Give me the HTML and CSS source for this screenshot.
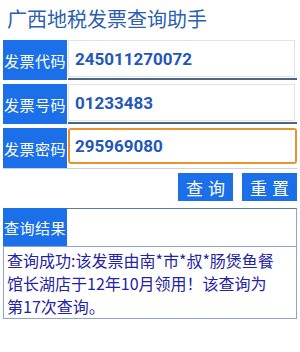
FILE: index.html
```html
<!DOCTYPE html>
<html lang="zh-CN">
<head>
    <meta charset="UTF-8">
    <meta name="viewport" content="width=device-width, initial-scale=1.0">
    <title>广西地税发票查询助手</title>
    <link rel="stylesheet" href="styles.css">
</head>
<body>
    <h1 class="title">广西地税发票查询助手</h1>

    <div class="row">
        <div class="label">发票代码</div>
        <div class="field"><div class="box">245011270072</div></div>
    </div>
    <div class="row">
        <div class="label">发票号码</div>
        <div class="field"><div class="box">01233483</div></div>
    </div>
    <div class="row row-last">
        <div class="label">发票密码</div>
        <div class="field focus"><div class="box">295969080</div></div>
    </div>

    <div class="buttons">
        <button class="btn">查询</button>
        <button class="btn">重置</button>
    </div>

    <div class="result">
        <div class="result-head">
            <div class="label">查询结果</div>
        </div>
        <div class="result-text">查询成功:该发票由南*市*叔*肠煲鱼餐<br>馆长湖店于12年10月领用！该查询为<br>第17次查询。</div>
    </div>
</body>
</html>
```

FILE: styles.css
```css
body {
    margin: 0;
    background-color: #fff;
    font-family: "Noto Sans CJK SC", "Noto Sans", sans-serif;
    width: 300px;
}
.title {
    margin: 0;
    height: 40px;
    padding-left: 7px;
    font-size: 20px;
    font-weight: normal;
    line-height: 38px;
    color: #2b5fb0;
}
.row {
    display: flex;
    height: 40px;
    margin: 0 3px 4px 3px;
}
.row-last {
    border-bottom: 1px solid #c8d4e2;
    height: 40px;
}
.label {
    width: 64px;
    flex-shrink: 0;
    background-color: #1b6fe8;
    color: #fff;
    font-size: 15px;
    letter-spacing: 0.5px;
    display: flex;
    align-items: center;
    justify-content: center;
}
.field {
    flex: 1;
    margin-left: 1px;
    padding: 0 2px 1px 0;
    border-bottom: 2px solid #4c6585;
}
.field .box {
    height: 100%;
    box-sizing: border-box;
    border: 1px solid #e3e3e3;
    background-color: #fff;
    padding-left: 6px;
    display: flex;
    align-items: center;
    font-family: Roboto, "Noto Sans", sans-serif;
    font-weight: bold;
    font-size: 17px;
    color: #2357b9;
}
.field.focus {
    padding: 0;
    margin-bottom: 4px;
    border: 2px solid #e8942e;
    border-radius: 3px;
}
.field.focus .box {
    border: none;
    padding-left: 5px;
}
.buttons {
    display: flex;
    justify-content: flex-end;
    gap: 9px;
    margin: 4px 3px 0 0;
}
.btn {
    width: 55px;
    height: 28px;
    border: none;
    padding: 0;
    background-color: #1b6fe8;
    color: #fff;
    font-family: "Noto Sans CJK SC", sans-serif;
    font-size: 17px;
    letter-spacing: 5px;
    text-indent: 5px;
}
.result {
    margin: 7px 3px 0 3px;
    border: 1px solid #8aa6c6;
    border-top-color: #5a7aa0;
}
.result-head {
    display: flex;
    height: 37px;
    border-bottom: 1px solid #8aa6c6;
}
.result-head .label {
    margin: -1px 0 0 -1px;
    height: 38px;
}
.result-text {
    padding: 2px 4px 0 3px;
    font-size: 16px;
    line-height: 23px;
    color: #2323a6;
}
```
